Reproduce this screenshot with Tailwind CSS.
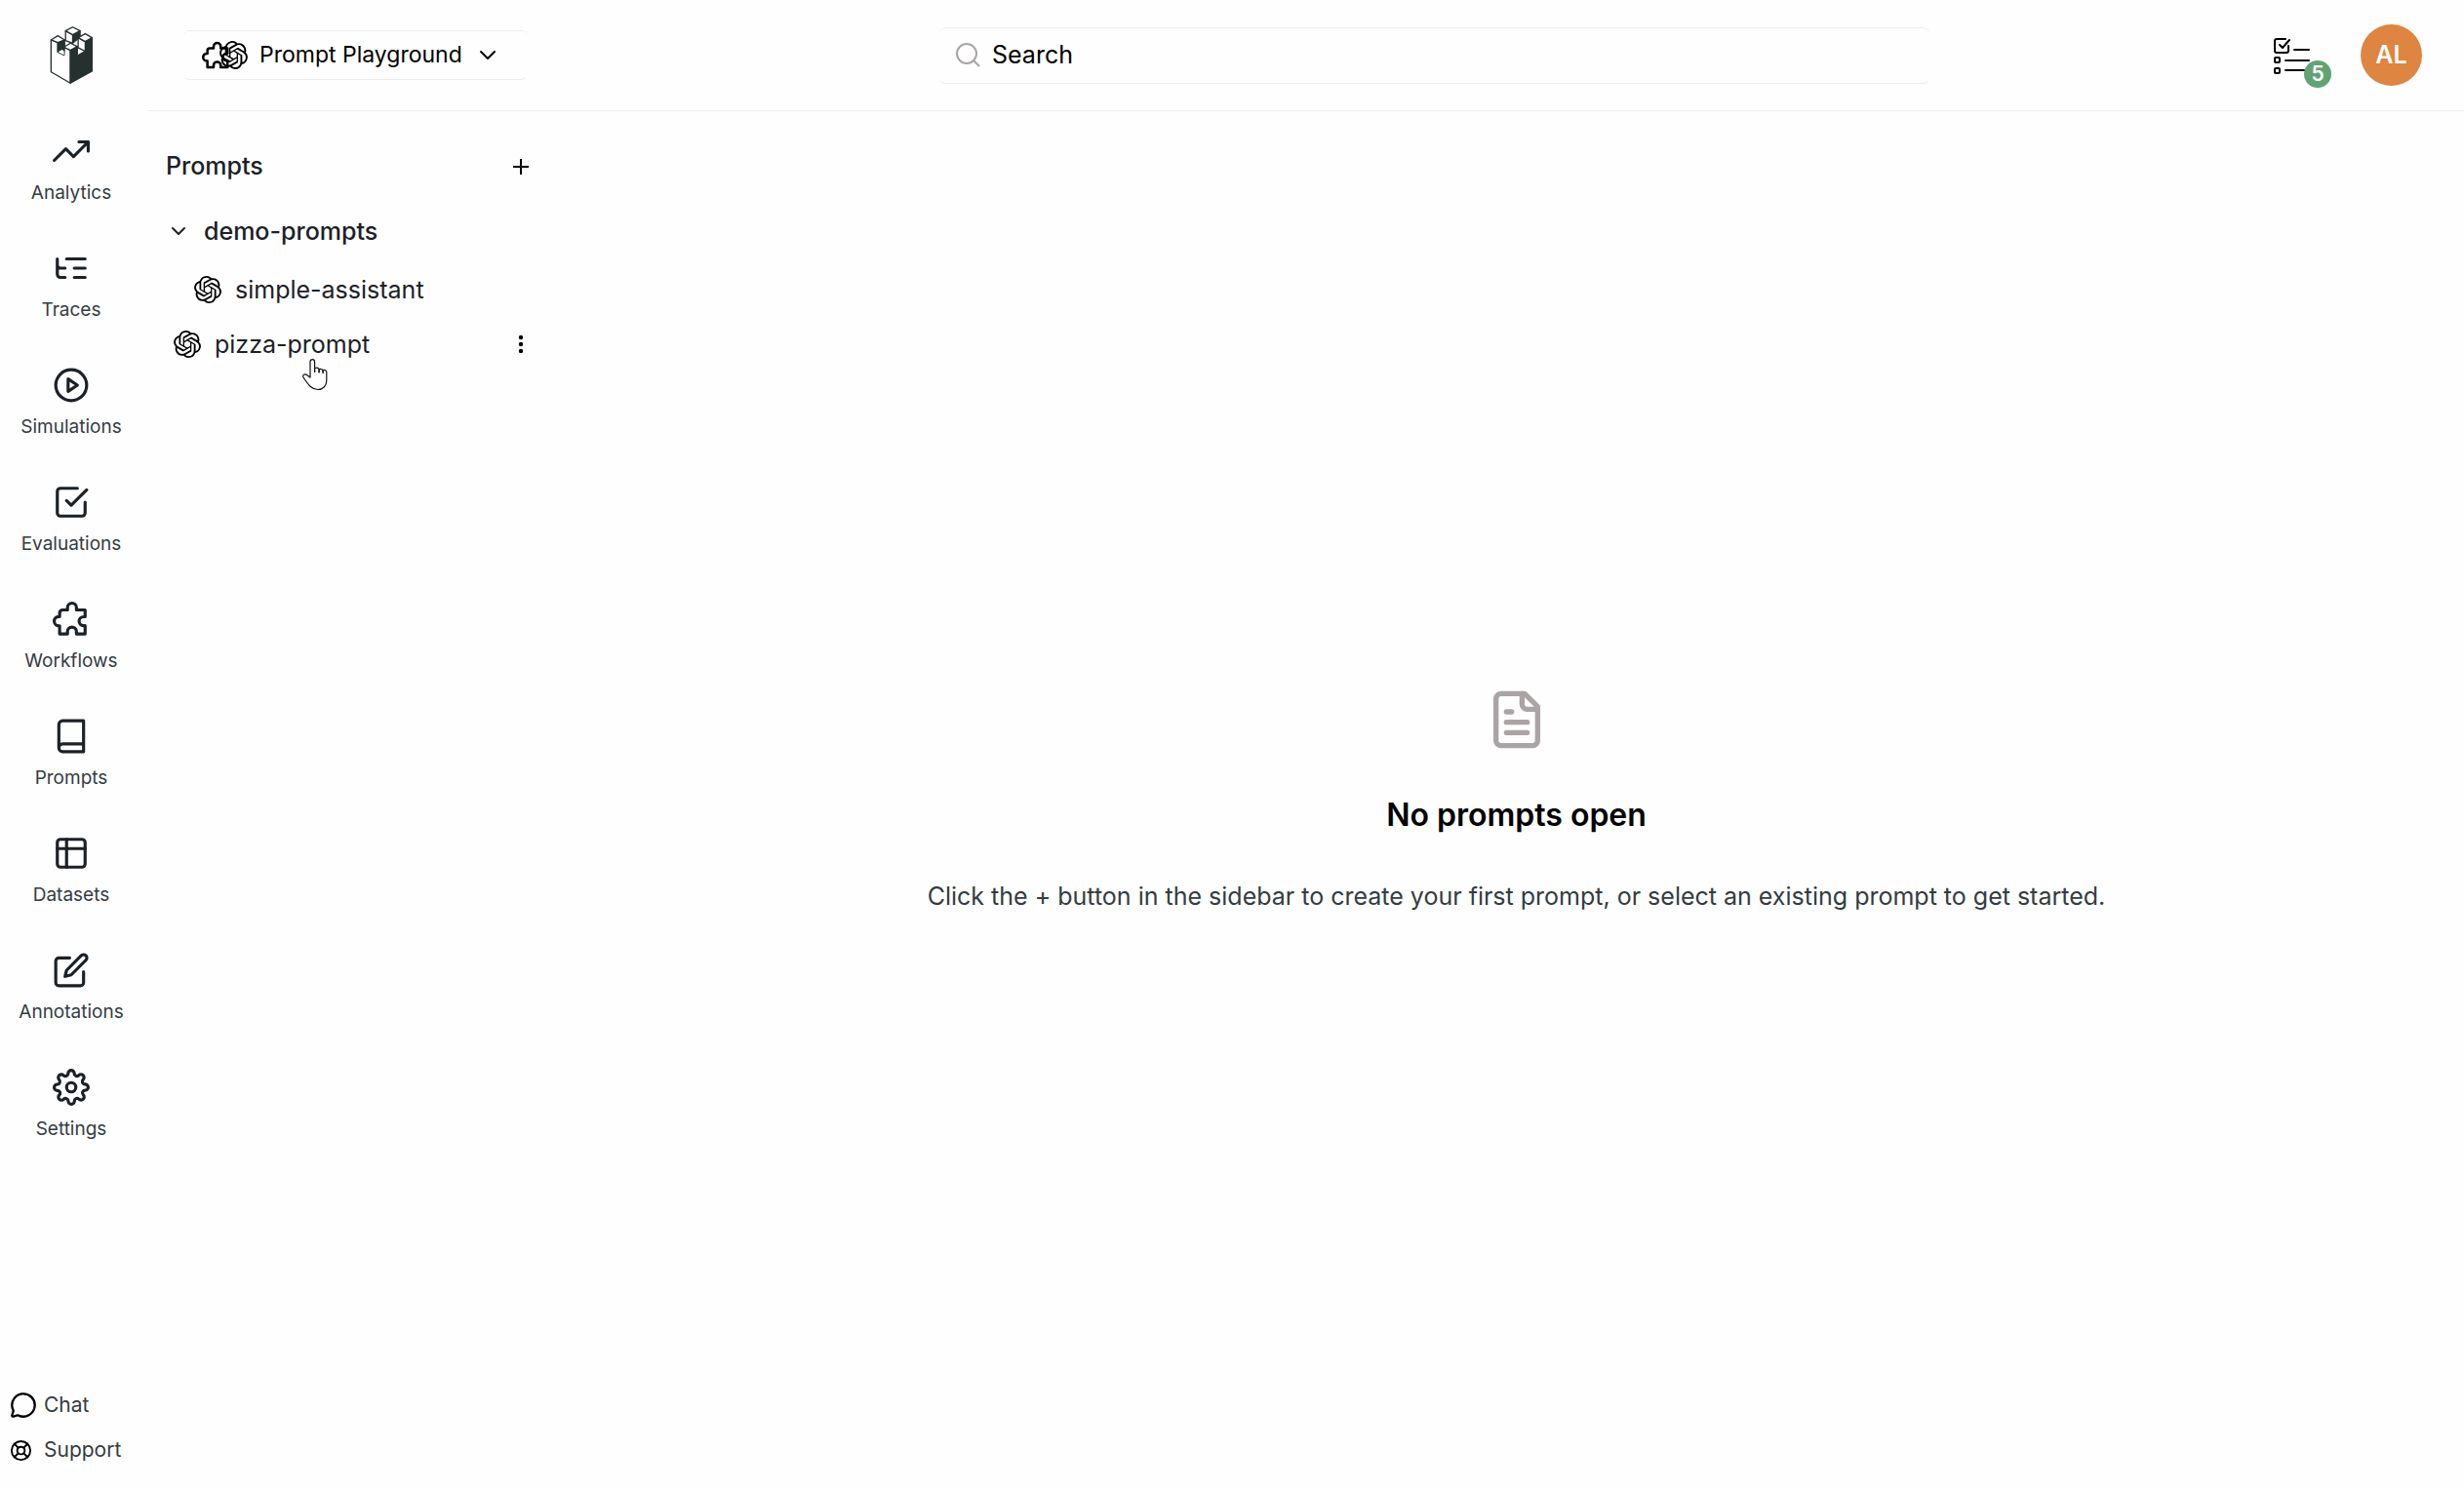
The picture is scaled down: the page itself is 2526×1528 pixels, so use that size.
<!DOCTYPE html>
<html lang="en">
<head>
<meta charset="utf-8">
<title>Prompt Playground</title>
<script src="https://cdn.jsdelivr.net/npm/@tailwindcss/browser@4"></script>
</head>
<body class="flex min-h-screen bg-[#fefefe] font-['Inter',sans-serif] text-[25px] text-[#1c2127]">
<svg class="hidden">
  <symbol id="openai" viewBox="0 0 24 24"><path fill="currentColor" d="M22.2819 9.8211a5.9847 5.9847 0 0 0-.5157-4.9108 6.0462 6.0462 0 0 0-6.5098-2.9A6.0651 6.0651 0 0 0 4.9807 4.1818a5.9847 5.9847 0 0 0-3.9977 2.9 6.0462 6.0462 0 0 0 .7427 7.0966 5.98 5.98 0 0 0 .511 4.9107 6.051 6.051 0 0 0 6.5146 2.9001A5.9847 5.9847 0 0 0 13.2599 24a6.0557 6.0557 0 0 0 5.7718-4.2058 5.9894 5.9894 0 0 0 3.9977-2.9001 6.0557 6.0557 0 0 0-.7475-7.0729zm-9.022 12.6081a4.4755 4.4755 0 0 1-2.8764-1.0408l.1419-.0804 4.7783-2.7582a.7948.7948 0 0 0 .3927-.6813v-6.7369l2.02 1.1686a.071.071 0 0 1 .038.052v5.5826a4.504 4.504 0 0 1-4.4945 4.4944zm-9.6607-4.1254a4.4708 4.4708 0 0 1-.5346-3.0137l.142.0852 4.783 2.7582a.7712.7712 0 0 0 .7806 0l5.8428-3.3685v2.3324a.0804.0804 0 0 1-.0332.0615L9.74 19.9502a4.4992 4.4992 0 0 1-6.1408-1.6464zM2.3408 7.8956a4.485 4.485 0 0 1 2.3655-1.9728V11.6a.7664.7664 0 0 0 .3879.6765l5.8144 3.3543-2.0201 1.1685a.0757.0757 0 0 1-.071 0l-4.8303-2.7865A4.504 4.504 0 0 1 2.3408 7.872zm16.5963 3.8558L13.1038 8.364 15.1192 7.2a.0757.0757 0 0 1 .071 0l4.8303 2.7913a4.4944 4.4944 0 0 1-.6765 8.1042v-5.6772a.79.79 0 0 0-.407-.667zm2.0107-3.0231l-.142-.0852-4.7735-2.7818a.7759.7759 0 0 0-.7854 0L9.409 9.2297V6.8974a.0662.0662 0 0 1 .0284-.0615l4.8303-2.7866a4.4992 4.4992 0 0 1 6.6802 4.66zM8.3065 12.863l-2.02-1.1638a.0804.0804 0 0 1-.038-.0567V6.0742a4.4992 4.4992 0 0 1 7.3757-3.4537l-.142.0805L8.704 5.459a.7948.7948 0 0 0-.3927.6813zm1.0976-2.3654l2.602-1.4998 2.6069 1.4998v2.9994l-2.5974 1.4997-2.6067-1.4997Z"/></symbol>
  <symbol id="puzzle" viewBox="0 0 24 24"><path fill="none" stroke="currentColor" stroke-width="2" stroke-linejoin="round" d="M4.500 21.500V16.300H4a3 3 0 0 1 0-6H4.500V8a2 2 0 0 1 2-2H9.600V4.500a2.900 2.900 0 0 1 5.800 0V6H21V10.400H20a2.900 2.900 0 0 0 0 5.800H21V21.500H15.400V20a2.900 2.900 0 0 0-5.800 0V21.500Z"/></symbol>
</svg>

<nav class="flex w-[146px] shrink-0 flex-col items-center pb-6" aria-label="Main">
  <a href="#" aria-label="Home" class="mt-6 mb-12 flex h-16 items-center">
    <svg class="h-[61px] w-[45px]" viewBox="60 48 136 184" fill="#fff" stroke="#26302f" stroke-width="4" stroke-linejoin="round">
      <path d="M64 93V192L124 227V125L104 115V140L85 130V101Z"/>
      <path fill="#26302f" d="M124 125 145 113V142L168 128V98L191 86V190L124 227Z"/>
      <path fill="#26302f" d="M85 101 106 93V117L104 140 85 130Z"/>
      <path stroke="none" d="M86 130 98 123 104 127V140Z"/>
      <path d="M64 93 85 80 106 93 85 101Z"/>
      <path fill="#26302f" d="M131 77 154 65V84L131 103Z"/>
      <path d="M109 65 131 77V103L109 95Z"/>
      <path d="M109 65 131 53 154 65 131 77Z"/>
      <path stroke-width="3" d="M146 117 152 119 168 128 146 141Z"/>
      <path d="M148 86 170 98V128L148 117Z"/>
      <path d="M148 86 170 74 191 86 170 98Z"/>
      <path d="M104 115 124 103 145 113 124 125Z"/>
    </svg>
  </a>
  <ul class="flex flex-col text-center text-[19px] leading-6 text-[#343c42]">
    <li class="h-[120px]"><a href="#" class="flex flex-col items-center gap-3"><svg class="size-[38px] text-[#1c2127]" viewBox="0 0 24 24" fill="none" stroke="currentColor" stroke-width="2" stroke-linecap="round" stroke-linejoin="round"><path d="M23 6l-9.500 9.500-5-5L1 18M17 6h6v6"/></svg>Analytics</a></li>
    <li class="h-[120px]"><a href="#" class="flex flex-col items-center gap-3"><svg class="size-[38px] text-[#1c2127]" viewBox="0 0 24 24" fill="none" stroke="currentColor" stroke-width="2" stroke-linecap="round" stroke-linejoin="round"><path d="M21 12h-7M21 6H9M21 18h-7M3 6v4c0 1.100.9 2 2 2h3M3 10v6c0 1.100.9 2 2 2h3"/></svg>Traces</a></li>
    <li class="h-[120px]"><a href="#" class="flex flex-col items-center gap-3"><svg class="size-[38px] text-[#1c2127]" viewBox="0 0 24 24" fill="none" stroke="currentColor" stroke-width="2" stroke-linecap="round" stroke-linejoin="round"><circle cx="12" cy="12" r="10"/><path d="M10 8l6 4-6 4z"/></svg>Simulations</a></li>
    <li class="h-[120px]"><a href="#" class="flex flex-col items-center gap-3"><svg class="size-[38px] text-[#1c2127]" viewBox="0 0 24 24" fill="none" stroke="currentColor" stroke-width="2" stroke-linecap="round" stroke-linejoin="round"><path d="M9 11l3 3L22 4M21 12v7a2 2 0 0 1-2 2H5a2 2 0 0 1-2-2V5a2 2 0 0 1 2-2h11"/></svg>Evaluations</a></li>
    <li class="h-[120px]"><a href="#" class="flex flex-col items-center gap-3"><svg class="size-[38px] text-[#1c2127]"><use href="#puzzle"/></svg>Workflows</a></li>
    <li class="h-[120px]"><a href="#" class="flex flex-col items-center gap-3"><svg class="size-[38px] text-[#1c2127]" viewBox="0 0 24 24" fill="none" stroke="currentColor" stroke-width="2" stroke-linecap="round" stroke-linejoin="round"><path d="M4 19.500A2.500 2.500 0 0 1 6.500 17H20M6.500 2H20v20H6.500A2.500 2.500 0 0 1 4 19.500v-15A2.500 2.500 0 0 1 6.500 2z"/></svg>Prompts</a></li>
    <li class="h-[120px]"><a href="#" class="flex flex-col items-center gap-3"><svg class="size-[38px] text-[#1c2127]" viewBox="0 0 24 24" fill="none" stroke="currentColor" stroke-width="2" stroke-linecap="round" stroke-linejoin="round"><rect x="3" y="3" width="18" height="18" rx="2"/><path d="M3 9h18M9 3v18"/></svg>Datasets</a></li>
    <li class="h-[120px]"><a href="#" class="flex flex-col items-center gap-3"><svg class="size-[38px] text-[#1c2127]" viewBox="0 0 24 24" fill="none" stroke="currentColor" stroke-width="2" stroke-linecap="round" stroke-linejoin="round"><path d="M11 4H4a2 2 0 0 0-2 2v14a2 2 0 0 0 2 2h14a2 2 0 0 0 2-2v-7"/><path d="M18.500 2.500a2.121 2.121 0 0 1 3 3L12 15l-4 1 1-4 9.500-9.500z"/></svg>Annotations</a></li>
    <li class="h-[120px]"><a href="#" class="flex flex-col items-center gap-3"><svg class="size-[38px] text-[#1c2127]" viewBox="0 0 24 24" fill="none" stroke="currentColor" stroke-width="2" stroke-linecap="round" stroke-linejoin="round"><circle cx="12" cy="12" r="3"/><path d="M19.400 15a1.650 1.650 0 0 0 .33 1.820l.06.06a2 2 0 0 1 0 2.830 2 2 0 0 1-2.830 0l-.06-.06a1.650 1.650 0 0 0-1.820-.33 1.650 1.650 0 0 0-1 1.510V21a2 2 0 0 1-2 2 2 2 0 0 1-2-2v-.09A1.650 1.650 0 0 0 9 19.400a1.650 1.650 0 0 0-1.820.33l-.06.06a2 2 0 0 1-2.830 0 2 2 0 0 1 0-2.830l.06-.06a1.650 1.650 0 0 0 .33-1.820 1.650 1.650 0 0 0-1.510-1H3a2 2 0 0 1-2-2 2 2 0 0 1 2-2h.09A1.650 1.650 0 0 0 4.600 9a1.650 1.650 0 0 0-.33-1.820l-.06-.06a2 2 0 0 1 0-2.830 2 2 0 0 1 2.830 0l.06.06a1.650 1.650 0 0 0 1.820.33H9a1.650 1.650 0 0 0 1-1.510V3a2 2 0 0 1 2-2 2 2 0 0 1 2 2v.09a1.650 1.650 0 0 0 1 1.510 1.650 1.650 0 0 0 1.820-.33l.06-.06a2 2 0 0 1 2.830 0 2 2 0 0 1 0 2.830l-.06.06a1.650 1.650 0 0 0-.33 1.820V9a1.650 1.650 0 0 0 1.510 1H21a2 2 0 0 1 2 2 2 2 0 0 1-2 2h-.09a1.650 1.650 0 0 0-1.510 1z"/></svg>Settings</a></li>
  </ul>
  <div class="mt-auto flex flex-col gap-3 self-stretch pl-[10px] text-[21px] leading-[34px] text-[#343c42]">
    <a href="#" class="flex items-center gap-[7px]"><svg class="size-[28px] text-black" viewBox="0 0 24 24" fill="none" stroke="currentColor" stroke-width="2" stroke-linecap="round" stroke-linejoin="round"><path d="M2.992 16.342a2 2 0 0 1 .094 1.167l-1.065 3.290a1 1 0 0 0 1.236 1.168l3.413-.998a2 2 0 0 1 1.099.092 10 10 0 1 0-4.777-4.719"/></svg>Chat</a>
    <a href="#" class="flex items-center gap-3"><svg class="size-[23px] text-black" viewBox="0 0 24 24" fill="none" stroke="currentColor" stroke-width="2" stroke-linecap="round"><circle cx="12" cy="12" r="10"/><circle cx="12" cy="12" r="4"/><path d="M5 5l4 4M15 9l4-4M15 15l4 4M9 15l-4 4"/></svg>Support</a>
  </div>
</nav>

<div class="ml-[6px] flex min-w-0 flex-1 flex-col">
  <header class="grid h-[114px] grid-cols-[811px_minmax(0,1fr)_548px] items-center border-b border-[#ececec]">
    <div class="pl-9">
      <button type="button" class="flex h-[51px] w-[352px] items-center rounded-md border-y border-[#ececec] pl-[19px] text-[23px] text-black">
        <span class="flex items-center"><svg class="size-[30px]"><use href="#puzzle"/></svg><svg class="-ml-3 size-[29px]"><use href="#openai"/></svg></span>
        <span class="ml-3">Prompt Playground</span>
        <svg class="ml-[14px] size-6" viewBox="0 0 24 24" fill="none" stroke="currentColor" stroke-width="2" stroke-linecap="round" stroke-linejoin="round"><path d="M5 8l7 7 7-7"/></svg>
      </button>
    </div>
    <label class="flex h-[58px] items-center gap-3 rounded-md border-y border-[#ececec] pl-4">
      <svg class="size-[26px] shrink-0 text-[#aaa4a5]" viewBox="0 0 26 26" fill="none" stroke="currentColor" stroke-width="2"><circle cx="12" cy="11" r="10"/><path d="M19 18l6 6"/></svg>
      <input type="search" placeholder="Search" aria-label="Search" class="w-full bg-transparent outline-none placeholder:text-black">
    </label>
    <div class="flex items-center justify-end gap-[30px] pr-[43px]">
      <button type="button" aria-label="Tasks" class="relative h-10 w-[60px]">
        <svg class="h-10 w-[42px]" viewBox="0 0 42 40" fill="none" stroke="#000" stroke-width="2" stroke-linecap="round" stroke-linejoin="round"><path d="M13 3H4a2 2 0 0 0-2 2V15a2 2 0 0 0 2 2H14a2 2 0 0 0 2-2V10M7 9l3 3 7-8M22 14H37M13 25H37M13 35H36"/><rect x="2" y="22" width="5" height="5" rx="1"/><rect x="2" y="33" width="5" height="5" rx="1"/></svg>
        <span class="absolute top-[25px] right-0 flex size-7 items-center justify-center rounded-full bg-[#61a375] text-[21px] font-semibold text-white">5</span>
      </button>
      <button type="button" aria-label="Account" class="flex size-[63px] items-center justify-center rounded-full bg-[#dd8541] font-semibold text-white">AL</button>
    </div>
  </header>

  <div class="flex flex-1">
    <aside class="w-[431px] shrink-0 pt-[33px] pr-[37px] pl-[18px]">
      <div class="flex h-12 items-center justify-between font-medium">
        <h2>Prompts</h2>
        <button type="button" aria-label="New prompt"><svg class="size-6" viewBox="0 0 24 24" fill="none" stroke="#000" stroke-width="2"><path d="M4 12h16M12 4v16"/></svg></button>
      </div>
      <ul class="mt-[15px] leading-[38px]">
        <li>
          <button type="button" class="flex h-[54px] items-center gap-[17px] font-medium"><svg class="ml-1 size-[18px]" viewBox="0 0 18 18" fill="none" stroke="currentColor" stroke-width="2" stroke-linecap="round" stroke-linejoin="round"><path d="M3 6l6 6 6-6"/></svg>demo-prompts</button>
          <ul><li class="flex h-[66px] items-center pl-[29px]"><a href="#" class="flex items-center gap-[14px]"><svg class="size-7 text-black"><use href="#openai"/></svg>simple-assistant</a></li></ul>
        </li>
        <li class="relative flex h-[46px] items-center pl-2">
          <a href="#" class="flex flex-1 items-center gap-[14px]"><svg class="size-7 text-black"><use href="#openai"/></svg>pizza-prompt</a>
          <button type="button" aria-label="More"><svg class="size-6" viewBox="0 0 24 24" fill="#000"><circle cx="12" cy="5" r="2.200"/><circle cx="12" cy="12" r="2.200"/><circle cx="12" cy="19" r="2.200"/></svg></button>
          <svg class="pointer-events-none absolute top-[37px] left-[139px] h-[34px] w-[27px]" viewBox="0 0 27 34" fill="#fff" stroke="#111" stroke-width="1.200" stroke-linejoin="round"><path d="M9 20V4a2.300 2.300 0 0 1 4.600 0V14V10.500q4-1 4.500 1.500V15V11.500q4-.5 4 2V15V12.500q3.500-.5 3.700 2V23c0 6-4 9.500-9 9.500-6 0-9-4-14.500-12-2-3 1-5 4-2.500L9 20Z"/><path fill="none" d="M13.600 10V15M18.100 11.500V15M22.100 12.500V16"/></svg>
        </li>
      </ul>
    </aside>
    <main class="flex flex-1 flex-col items-center pt-[592px] text-center">
      <svg class="size-16 text-[#aaa4a5]" viewBox="0 0 24 24" fill="none" stroke="currentColor" stroke-width="2" stroke-linecap="round" stroke-linejoin="round"><path d="M15 2H6a2 2 0 0 0-2 2v16a2 2 0 0 0 2 2h12a2 2 0 0 0 2-2V7ZM14 2v4a2 2 0 0 0 2 2h4M10 9H8M16 13H8M16 17H8"/></svg>
      <h1 class="mt-11 text-[32px] leading-[44px] font-semibold text-black">No prompts open</h1>
      <p class="mt-[42px] leading-[38px] text-[#343c42]">Click the + button in the sidebar to create your first prompt, or select an existing prompt to get started.</p>
    </main>
  </div>
</div>
</body>
</html>
